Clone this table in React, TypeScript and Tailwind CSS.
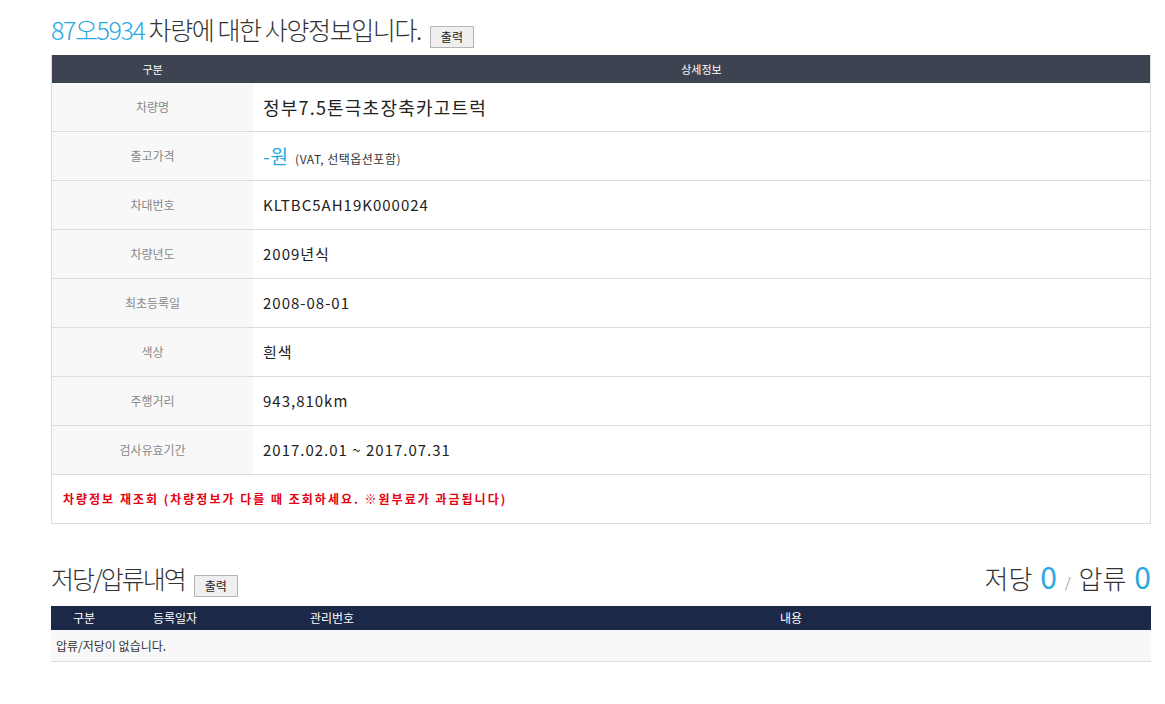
const font = { fontFamily: '"Noto Sans CJK KR", "Noto Sans", sans-serif' };

const specRows: { label: string; value: React.ReactNode }[] = [
  { label: "차량명", value: <span className="text-[18px] tracking-[1.2px]">정부7.5톤극초장축카고트럭</span> },
  {
    label: "출고가격",
    value: (
      <span>
        <span className="text-[19px] text-[#29a8e0]">-원</span>
        <span className="ml-1.5 text-[12px] tracking-[0.5px] text-[#333]">(VAT, 선택옵션포함)</span>
      </span>
    ),
  },
  { label: "차대번호", value: "KLTBC5AH19K000024" },
  { label: "차량년도", value: "2009년식" },
  { label: "최초등록일", value: "2008-08-01" },
  { label: "색상", value: "흰색" },
  { label: "주행거리", value: "943,810km" },
  { label: "검사유효기간", value: "2017.02.01 ~ 2017.07.31" },
];

function PrintButton() {
  return (
    <button className="ml-[9px] h-[22px] w-[44px] border border-[#b5b5b5] bg-[#efefef] text-[12px] leading-none text-[#222]">
      출력
    </button>
  );
}

export default function App() {
  return (
    <div className="min-h-screen bg-white pl-[51px] pr-[14px] pt-[15px]" style={font}>
      {/* 사양정보 */}
      <div className="flex h-[33px] items-end">
        <h1 className="mb-[6px] text-[25px] leading-none font-light tracking-[-1.4px] text-[#333]">
          <span className="text-[#29a8e0]">87오5934</span> 차량에 대한 사양정보입니다.
        </h1>
        <PrintButton />
      </div>

      <div className="mt-[7px] w-[1100px] border-b border-l border-r border-[#dcdcdc]">
        <div className="flex h-[28px] items-center bg-[#3d4350] text-[11px] text-white">
          <div className="w-[201px] text-center">구분</div>
          <div className="flex-1 text-center">상세정보</div>
        </div>
        {specRows.map((r) => (
          <div key={r.label} className="flex h-[49px] border-b border-[#dcdcdc]">
            <div className="flex w-[201px] items-center justify-center bg-[#f8f8f8] text-[12px] text-[#888]">
              {r.label}
            </div>
            <div className="flex flex-1 items-center pl-[10px] text-[15px] tracking-[1px] text-[#222]">
              {r.value}
            </div>
          </div>
        ))}
        <div className="flex h-[48px] items-center pl-[11px] text-[12px] font-bold tracking-[2px] text-[#e60012]">
          차량정보 재조회 (차량정보가 다를 때 조회하세요. ※원부료가 과금됩니다)
        </div>
      </div>

      {/* 저당/압류내역 */}
      <div className="mt-[37px] flex w-[1100px] items-end justify-between">
        <div className="flex items-end">
          <h2 className="mb-[6px] text-[25px] leading-none font-light tracking-[-2px] text-[#333]">
            저당/압류내역
          </h2>
          <PrintButton />
        </div>
        <div className="mb-[6px] flex items-end text-[26px] leading-none font-light text-[#333]">
          <span>저당</span>
          <span className="ml-2 text-[30px] font-normal text-[#29a8e0]">0</span>
          <span className="mx-2 mb-[2px] text-[14px] text-[#777]">/</span>
          <span>압류</span>
          <span className="ml-2 text-[30px] font-normal text-[#29a8e0]">0</span>
        </div>
      </div>

      <div className="mt-[9px] w-[1100px]">
        <div className="flex h-[24px] items-center bg-[#1b2847] text-[12px] text-white">
          <div className="w-[66px] text-center">구분</div>
          <div className="w-[116px] text-center">등록일자</div>
          <div className="w-[198px] text-center">관리번호</div>
          <div className="flex-1 text-center">내용</div>
        </div>
        <div className="flex h-[32px] items-center border-b border-[#dcdcdc] bg-[#f8f8f8] pl-[5px] text-[12px] text-[#333]">
          압류/저당이 없습니다.
        </div>
      </div>
    </div>
  );
}
